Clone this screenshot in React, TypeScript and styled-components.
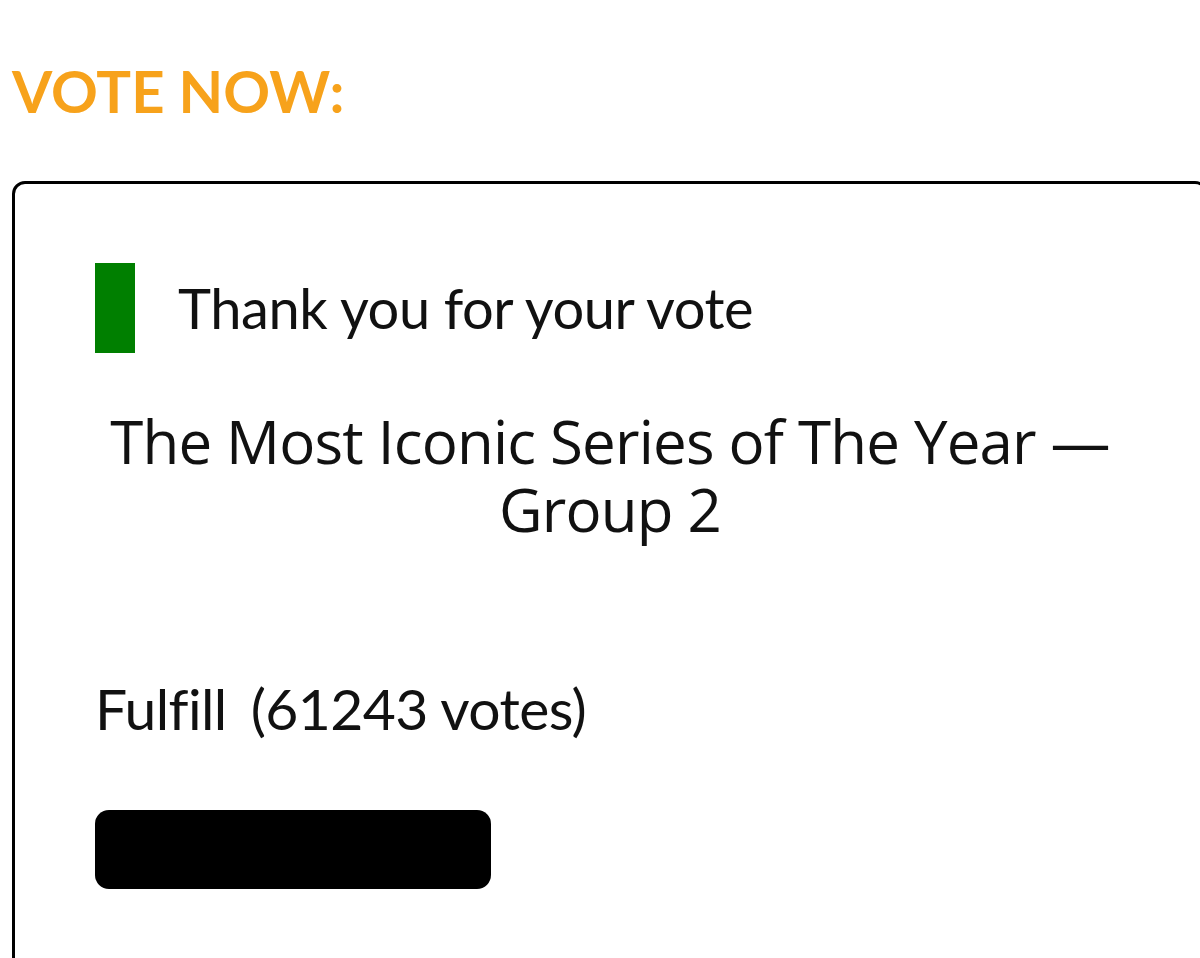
import React from 'react';
import styled, { createGlobalStyle } from 'styled-components';

const GlobalStyle = createGlobalStyle`
    html, body {
        margin: 0;
        padding: 0;
        background: #fff;
        overflow: hidden;
    }
`;

const Page = styled.div`
    padding: 62px 0 0 12px;
    width: 1200px;
    box-sizing: border-box;
`;

const Heading = styled.h2`
    margin: 0;
    font-family: Lato, 'Liberation Sans', sans-serif;
    font-weight: 700;
    font-size: 58px;
    line-height: 1;
    letter-spacing: 0;
    color: #f7a21b;
`;

const Card = styled.div`
    margin-top: 61px;
    width: 1196px;
    box-sizing: border-box;
    border: 3px solid #000;
    border-radius: 13px;
    padding: 79px 80px 120px;
`;

const Notice = styled.div`
    display: flex;
    align-items: center;
    gap: 43px;
`;

const NoticeMark = styled.span<{ tone: string }>`
    display: block;
    width: 40px;
    height: 90px;
    background-color: ${props => props.tone};
`;

const NoticeText = styled.span`
    font-family: Lato, 'Liberation Sans', sans-serif;
    font-size: 56px;
    line-height: 1;
    letter-spacing: -0.4px;
    color: #111;
`;

const PollTitle = styled.h3`
    margin: 54px 0 0;
    font-family: 'Open Sans', 'Noto Sans', sans-serif;
    font-weight: 400;
    font-size: 60px;
    line-height: 68px;
    text-align: center;
    color: #111;
    letter-spacing: -0.8px;
`;

const Option = styled.div`
    margin-top: 137px;
    font-family: Lato, 'Liberation Sans', sans-serif;
    font-size: 57px;
    line-height: 1;
    letter-spacing: -0.6px;
    color: #111;
`;

const VoteCount = styled.span`
    margin-left: 10px;
`;

const Track = styled.div`
    margin-top: 73px;
    width: 100%;
`;

const Fill = styled.div`
    height: 79px;
    background: #000;
    border-radius: 14px;
`;

const poll = {
    title: 'The Most Iconic Series of The Year — Group 2',
    option: 'Fulfill',
    votes: 61243,
    share: 38.4,
};

export default function App() {
    return (
        <Page>
            <GlobalStyle />
            <Heading>VOTE NOW:</Heading>
            <Card>
                <Notice>
                    <NoticeMark tone='#007f00' />
                    <NoticeText>Thank you for your vote</NoticeText>
                </Notice>
                <PollTitle>{poll.title}</PollTitle>
                <Option>
                    {poll.option}
                    <VoteCount> ({poll.votes} votes)</VoteCount>
                </Option>
                <Track>
                    <Fill style={{ width: `${poll.share}%` }} />
                </Track>
            </Card>
        </Page>
    );
}
